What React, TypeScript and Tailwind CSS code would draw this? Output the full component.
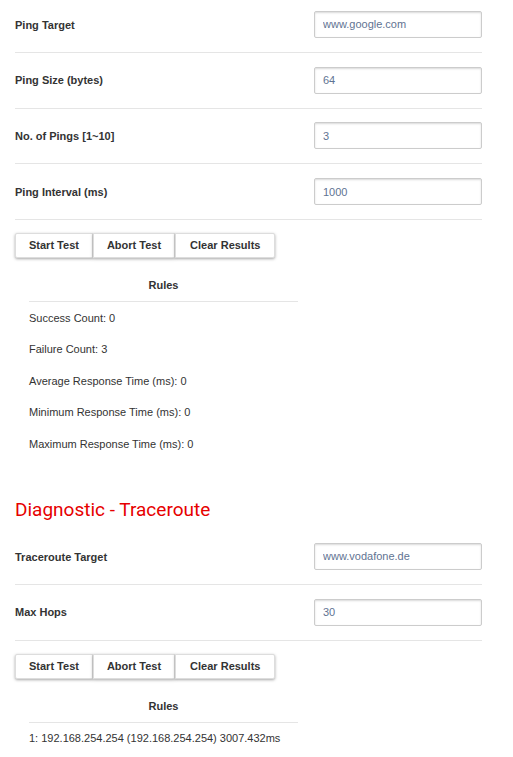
import React from 'react';

type Field = { label: string; value: string };

const pingFields: Field[] = [
    { label: 'Ping Target', value: 'www.google.com' },
    { label: 'Ping Size (bytes)', value: '64' },
    { label: 'No. of Pings [1~10]', value: '3' },
    { label: 'Ping Interval (ms)', value: '1000' },
];

const traceFields: Field[] = [
    { label: 'Traceroute Target', value: 'www.vodafone.de' },
    { label: 'Max Hops', value: '30' },
];

const pingResults = [
    'Success Count: 0',
    'Failure Count: 3',
    'Average Response Time (ms): 0',
    'Minimum Response Time (ms): 0',
    'Maximum Response Time (ms): 0',
];

const traceResults = ['1: 192.168.254.254 (192.168.254.254) 3007.432ms'];

const FieldRow = ({ label, value }: Field) => (
    <div className="flex h-[55.75px] items-center justify-between border-b border-[#e5e5e5]">
        <span className="pt-[1px] text-[11px] font-bold text-[#333]">{label}</span>
        <input
            type="text"
            defaultValue={value}
            className="h-[27px] w-[168px] rounded-[2px] border border-[#ccc] bg-white px-[8px] text-[11px] text-[#5f7392] shadow-[inset_0_1px_2px_rgba(0,0,0,0.15)] outline-none"
        />
    </div>
);

const TestButtons = () => (
    <div className="mt-[13px] flex pl-[-1px]">
        {['Start Test', 'Abort Test', 'Clear Results'].map((t) => (
            <button
                key={t}
                type="button"
                className="h-[25px] border border-[#ddd] bg-white px-[13px] text-[11px] font-bold text-[#333] shadow-[0_1px_3px_rgba(0,0,0,0.35)] first:rounded-l-[2px] last:rounded-r-[2px] last:px-[14px]"
            >
                {t}
            </button>
        ))}
    </div>
);

const Results = ({ rows }: { rows: string[] }) => (
    <div className="ml-[14px] mt-[12px] w-[269px] text-[11px] text-[#333]">
        <div className="flex h-[32px] items-center justify-center border-b border-[#e5e5e5] font-bold">
            Rules
        </div>
        {rows.map((r) => (
            <div key={r} className="flex h-[31.5px] items-center">
                {r}
            </div>
        ))}
    </div>
);

export default function App() {
    return (
        <div className="min-h-screen bg-white font-['Liberation_Sans',Arial,sans-serif]">
            <div className="mt-[-3px] w-[482px] pl-[15px]">
                {pingFields.map((f) => (
                    <FieldRow key={f.label} {...f} />
                ))}
                <TestButtons />
                <Results rows={pingResults} />

                <h2 className="mb-[4px] mt-[35.5px] h-[30px] font-['Roboto',sans-serif] text-[19px] leading-[30px] text-[#e60000]">
                    Diagnostic - Traceroute
                </h2>

                {traceFields.map((f) => (
                    <FieldRow key={f.label} {...f} />
                ))}
                <TestButtons />
                <Results rows={traceResults} />
            </div>
        </div>
    );
}
